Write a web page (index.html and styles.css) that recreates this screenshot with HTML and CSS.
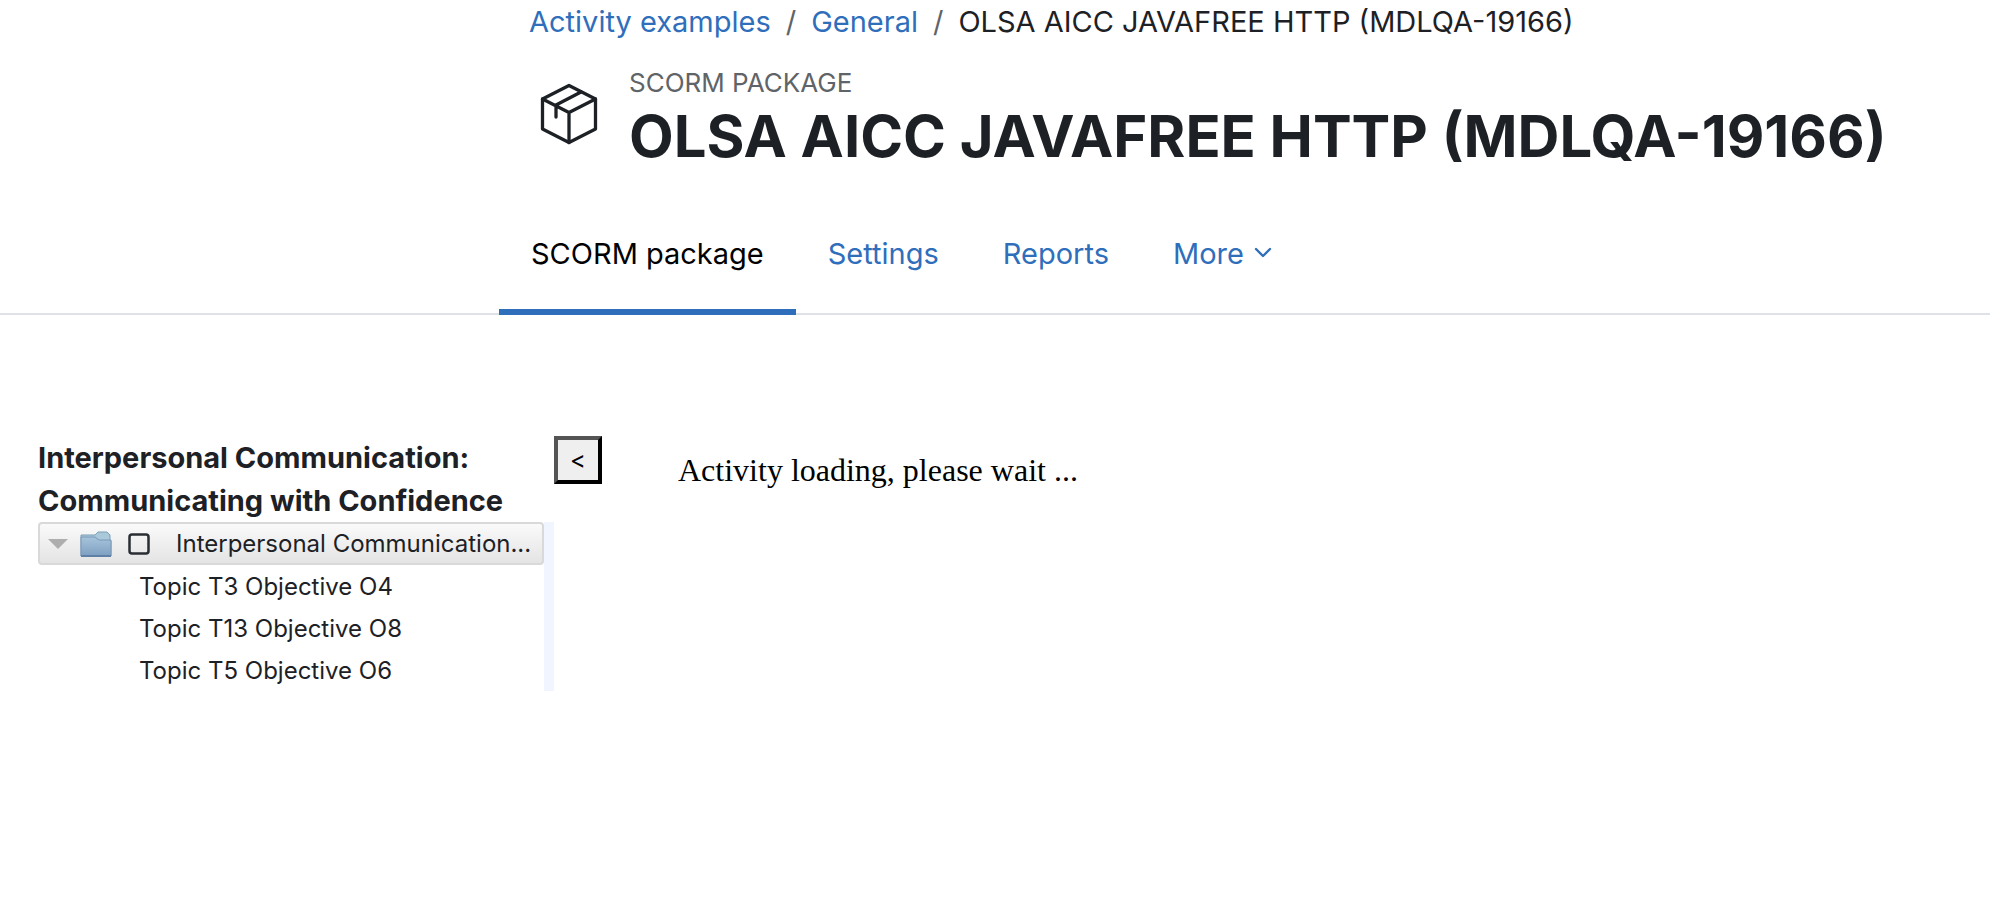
FILE: index.html
```html
<!DOCTYPE html>
<html lang="en">
<head>
    <meta charset="utf-8">
    <meta name="viewport" content="width=device-width, initial-scale=1">
    <title>OLSA AICC JAVAFREE HTTP (MDLQA-19166)</title>
    <link rel="stylesheet" href="styles.css">
</head>
<body>
    <header class="page-header">
        <nav aria-label="Breadcrumb">
            <ol class="breadcrumb">
                <li><a href="#">Activity examples</a></li>
                <li><a href="#">General</a></li>
                <li>OLSA AICC JAVAFREE HTTP (MDLQA-19166)</li>
            </ol>
        </nav>
        <div class="activity-header">
            <svg class="activity-icon" viewBox="0 0 60 66" fill="none" stroke="currentColor" stroke-width="3.3" stroke-linecap="round" stroke-linejoin="round" aria-hidden="true">
                <path d="M30 4.500 56.500 18V48L30 61.500 3.500 48V18Z"/>
                <path d="M3.500 18 30 31.500 56.500 18M30 31.500V61.500M42 11 17 24V36"/>
            </svg>
            <div class="activity-title">
                <div class="activity-type">SCORM PACKAGE</div>
                <h1>OLSA AICC JAVAFREE HTTP (MDLQA-19166)</h1>
            </div>
        </div>
    </header>

    <nav class="tabs" aria-label="Activity">
        <a class="tab active" href="#" aria-current="page">SCORM package</a>
        <a class="tab" href="#">Settings</a>
        <a class="tab" href="#">Reports</a>
        <a class="tab" href="#">More
            <svg class="chevron" viewBox="0 0 18 12" fill="none" stroke="currentColor" stroke-width="2.4" stroke-linecap="round" stroke-linejoin="round" aria-hidden="true">
                <path d="M2 2 9 9 16 2"/>
            </svg>
        </a>
    </nav>

    <main class="player">
        <aside class="toc">
            <h2>Interpersonal Communication: Communicating with Confidence</h2>
            <div class="tree">
                <ul>
                    <li class="node selected">
                        <svg class="arrow" viewBox="0 0 20 10" aria-hidden="true"><path d="M0 0H20L10 10Z" fill="#aeaeae"/></svg>
                        <svg class="folder" viewBox="0 0 32 28" aria-hidden="true">
                            <defs>
                                <linearGradient id="folder-fill" x1="0" y1="0" x2="0" y2="1">
                                    <stop offset="0" stop-color="#a6c4da"/>
                                    <stop offset="1" stop-color="#7f9fc2"/>
                                </linearGradient>
                            </defs>
                            <path d="M1 5H15L18 2H27L30 5V11H31V26H1Z" fill="#a9c8d9" stroke="#7d9fb9"/>
                            <path d="M1 7H15L19 10H31V26H1Z" fill="url(#folder-fill)" stroke="#7898b8"/>
                            <path d="M1 26H31" stroke="#5f7fa6" stroke-width="2"/>
                        </svg>
                        <svg class="status" viewBox="0 0 22 22" aria-hidden="true"><rect x="1.500" y="1.500" width="19" height="19" rx="2.500" fill="none" stroke="#292e33" stroke-width="2.500"/></svg>
                        <a class="label" href="#">Interpersonal Communication...</a>
                    </li>
                    <li class="node child"><a href="#">Topic T3 Objective O4</a></li>
                    <li class="node child"><a href="#">Topic T13 Objective O8</a></li>
                    <li class="node child"><a href="#">Topic T5 Objective O6</a></li>
                </ul>
            </div>
        </aside>
        <button class="toggle" type="button" aria-label="Hide course structure">&lt;</button>
        <p class="loading">Activity loading, please wait ...</p>
    </main>
</body>
</html>
```
FILE: styles.css
```css
* {
    box-sizing: border-box;
    margin: 0;
    padding: 0;
}
body {
    background: #fff;
    color: #1d2125;
    font-family: Inter, "Liberation Sans", sans-serif;
    font-size: 29px;
    line-height: 43px;
}
a {
    color: #2f6ebb;
    text-decoration: none;
}
ol, ul {
    list-style: none;
}

/* header */
.page-header {
    padding-left: 529px;
}
.breadcrumb {
    display: flex;
    white-space: nowrap;
}
.breadcrumb li + li::before {
    content: "/";
    padding: 0 15px;
    color: #5f6468;
}
.activity-header {
    display: flex;
    gap: 30px;
    padding: 20px 0 0 10px;
}
.activity-icon {
    flex-shrink: 0;
    width: 60px;
    height: 66px;
    margin-top: 18px;
}
.activity-type {
    color: #5f6468;
    font-size: 26px;
    line-height: 40px;
}
h1 {
    font-size: 58px;
    font-weight: 700;
    line-height: 66px;
    white-space: nowrap;
}

/* tabs */
.tabs {
    display: flex;
    margin-top: 24px;
    padding-left: 499px;
    border-bottom: 2px solid #dee2e6;
}
.tab {
    display: flex;
    align-items: center;
    gap: 10px;
    height: 122px;
    margin-bottom: -2px;
    padding: 4px 32px 0;
    border-bottom: 6px solid transparent;
}
.tab.active {
    border-color: #2f6ebb;
    color: #000;
}
.chevron {
    width: 18px;
    height: 12px;
}

/* player */
.player {
    display: flex;
    align-items: flex-start;
    padding: 121px 38px 0;
}
.toc {
    width: 516px;
}
.toc h2 {
    font-size: 29px;
    font-weight: 700;
    line-height: 43px;
}
.tree {
    border-right: 10px solid #f0f5ff;
    font-size: 24px;
}
.node {
    display: flex;
    align-items: center;
    height: 42px;
}
.node a {
    color: #1d2125;
    white-space: nowrap;
}
.node.selected {
    height: 43px;
    padding-left: 8px;
    border: 2px solid #d9d9d9;
    border-radius: 4px;
    background: linear-gradient(#fafafa, #e4e4e4);
}
.node.child {
    padding-left: 101px;
}
.arrow {
    width: 20px;
    height: 10px;
}
.folder {
    width: 32px;
    height: 28px;
    margin-left: 12px;
}
.status {
    width: 22px;
    height: 22px;
    margin-left: 16px;
}
.label {
    margin-left: 26px;
}
.toggle {
    width: 48px;
    height: 48px;
    border: 4px outset #000;
    background: #efefef;
    color: #000;
    font-family: Inter, "Liberation Sans", sans-serif;
    font-size: 24px;
    line-height: 36px;
}
.loading {
    padding: 13px 0 0 76px;
    color: #000;
    font-family: "Liberation Serif", serif;
    font-size: 32px;
}
```
